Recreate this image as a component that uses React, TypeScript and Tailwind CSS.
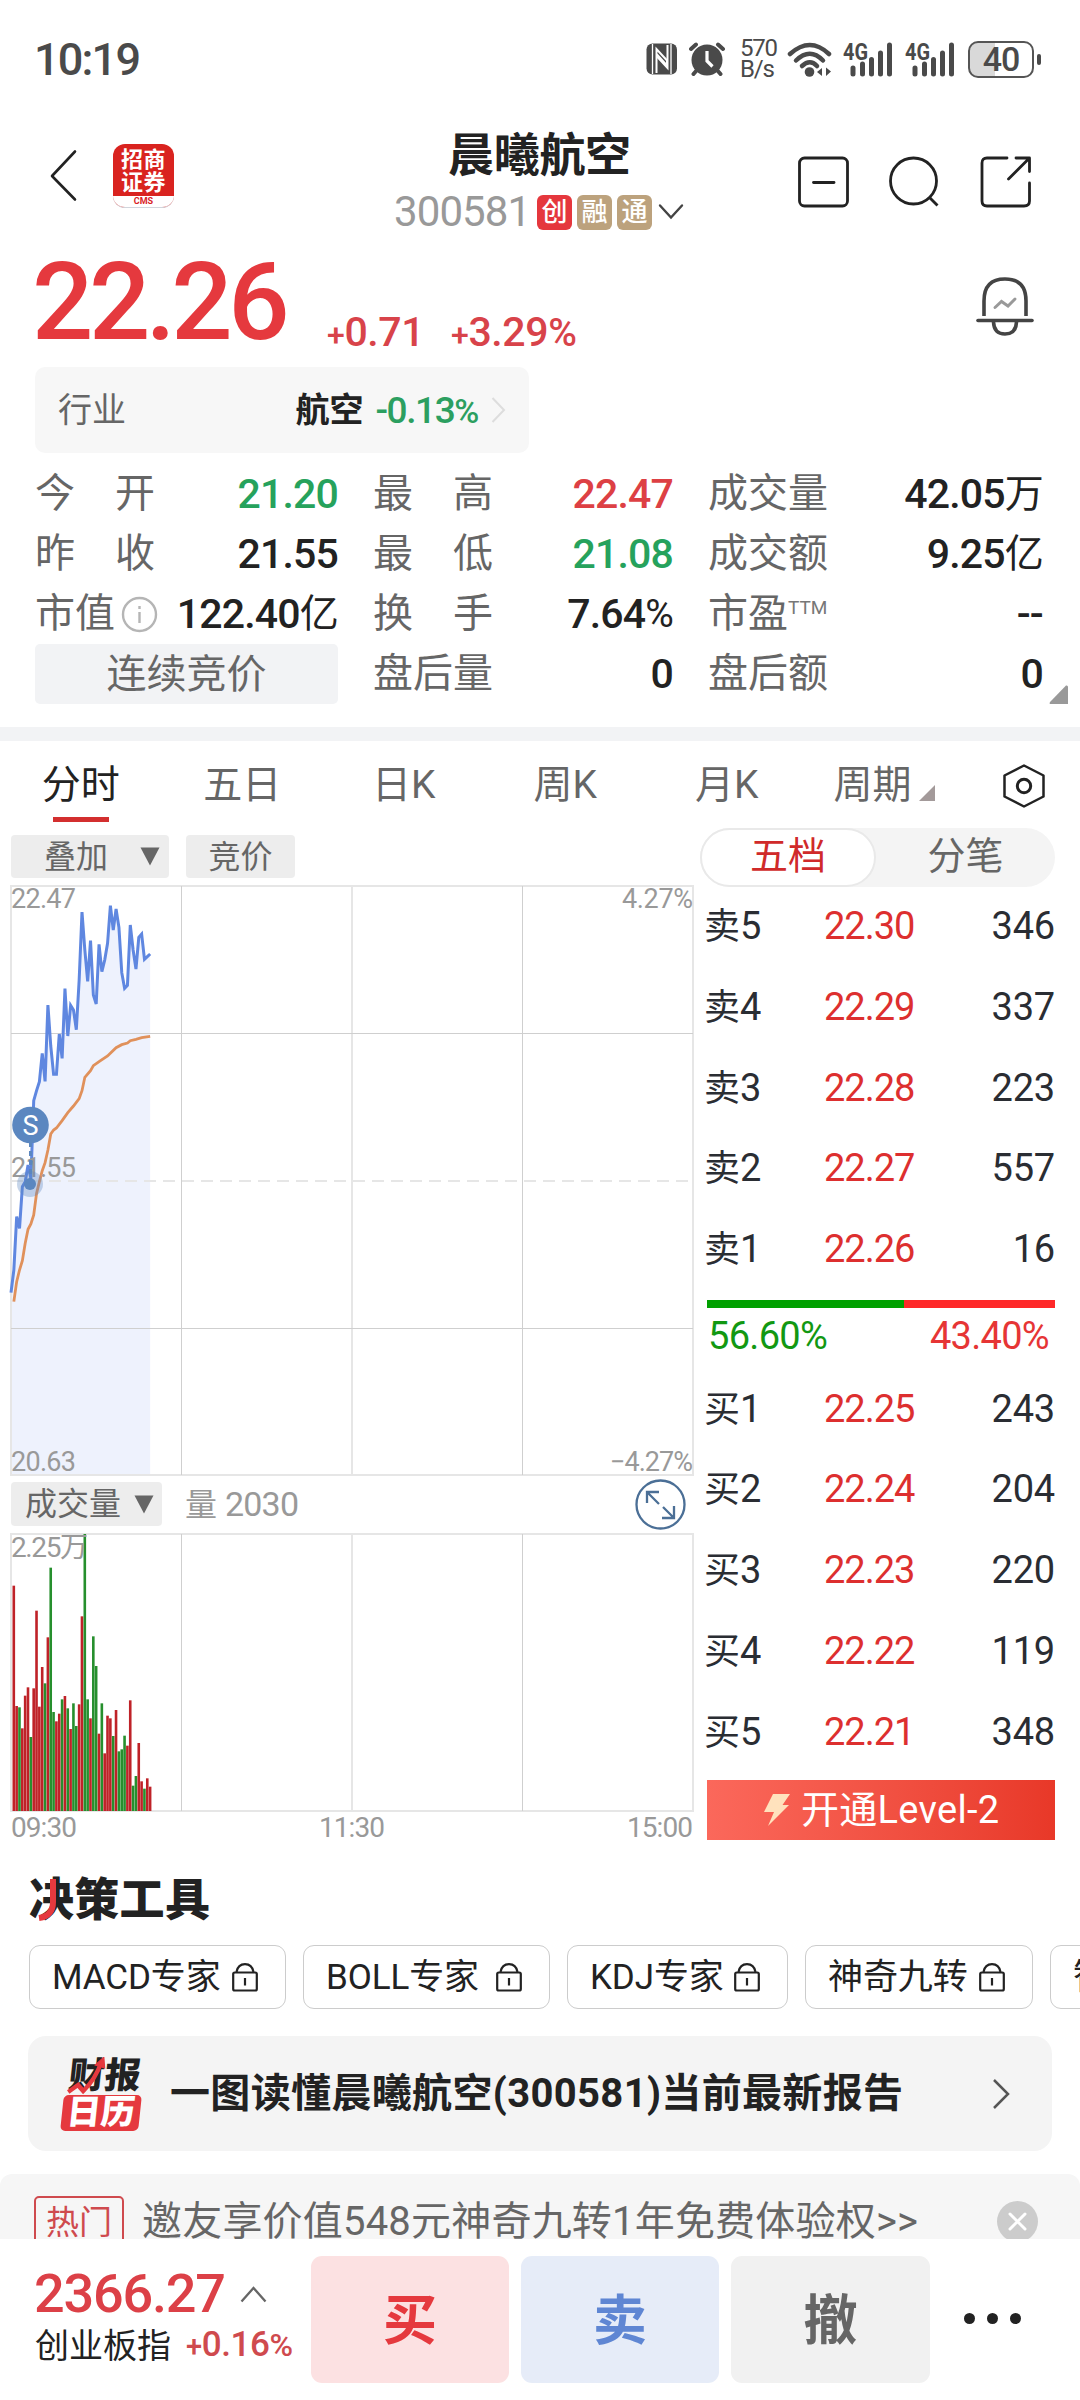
import React from 'react';

const stats = [
  [
    { label: '今开', value: '21.20', color: 'text-[#26a25c]' },
    { label: '最高', value: '22.47', color: 'text-[#dd4044]' },
    { label: '成交量', value: '42.05', unit: '万', color: 'text-[#222]' }
  ],
  [
    { label: '昨收', value: '21.55', color: 'text-[#222]' },
    { label: '最低', value: '21.08', color: 'text-[#26a25c]' },
    { label: '成交额', value: '9.25', unit: '亿', color: 'text-[#222]' }
  ],
  [
    { label: '市值', value: '122.40', unit: '亿', color: 'text-[#222]', info: true },
    { label: '换手', value: '7.64%', color: 'text-[#222]' },
    { label: '市盈', value: '--', color: 'text-[#222]', ttm: true }
  ],
  [
    { label: '', value: '', color: '', phase: '连续竞价' },
    { label: '盘后量', value: '0', color: 'text-[#222]' },
    { label: '盘后额', value: '0', color: 'text-[#222]' }
  ]
];

const asks = [
  ['卖5', '22.30', '346'],
  ['卖4', '22.29', '337'],
  ['卖3', '22.28', '223'],
  ['卖2', '22.27', '557'],
  ['卖1', '22.26', '16']
];

const bids = [
  ['买1', '22.25', '243'],
  ['买2', '22.24', '204'],
  ['买3', '22.23', '220'],
  ['买4', '22.22', '119'],
  ['买5', '22.21', '348']
];

const tools = [
  { name: 'MACD专家', width: 'w-[257px]' },
  { name: 'BOLL专家', width: 'w-[247px]' },
  { name: 'KDJ专家', width: 'w-[221px]' },
  { name: '神奇九转', width: 'w-[228px]' },
  { name: '智能选股', width: 'w-[228px]' }
];

// one value per minute, in thirds of a pixel below the top of the price chart
const STEP = 2.84;
const price = [
  1220, 1152, 992, 1027, 902, 887, 837, 877, 644, 614, 587, 502, 586, 357, 480, 565, 565, 444, 517, 308, 450, 358, 372,
  431, 282, 78, 192, 286, 164, 327, 354, 175, 257, 222, 172, 59, 132, 69, 124, 260, 307, 298, 117, 192, 249, 154, 144,
  220, 212, 204
];
const average = [
  [1, 1247], [2, 1187], [3, 1152], [4, 1124], [5, 1072], [6, 1030], [7, 1014], [8, 987], [9, 922], [10, 887],
  [11, 854], [12, 830], [13, 792], [14, 744], [15, 732], [16, 726], [18, 704], [20, 680], [22, 660], [24, 638],
  [25, 614], [26, 574], [28, 554], [29, 539], [31, 527], [34, 510], [37, 485], [39, 476], [41, 471], [42, 464],
  [44, 460], [46, 455], [49, 451]
];

const volume: [number, string][] = [
  [155, 'r'], [516, 'r'], [520, 'g'], [583, 'r'], [485, 'r'], [460, 'r'], [609, 'g'], [463, 'r'], [230, 'r'],
  [518, 'r'], [399, 'r'], [448, 'g'], [310, 'r'], [101, 'g'], [534, 'g'], [562, 'r'], [539, 'r'], [496, 'g'],
  [486, 'r'], [523, 'g'], [585, 'r'], [508, 'g'], [576, 'g'], [511, 'r'], [247, 'r'], [0, 'g'], [496, 'g'],
  [553, 'r'], [307, 'g'], [396, 'g'], [599, 'r'], [508, 'g'], [658, 'r'], [545, 'r'], [553, 'r'], [606, 'g'],
  [528, 'r'], [652, 'g'], [646, 'g'], [605, 'g'], [635, 'r'], [499, 'r'], [755, 'g'], [726, 'g'], [627, 'r'],
  [742, 'r'], [764, 'g'], [733, 'r'], [758, 'r']
];

function StatusBar() {
  return (
    <div className="flex h-[118px] items-center pl-[34px] text-[#4a4a4a]">
      <span className="w-[612px] text-[45px] font-medium leading-none tracking-[-1.8px]">10:19</span>
      <svg className="h-8 w-8" viewBox="0 0 32 32">
        <rect x="0.5" y="0.5" width="30.5" height="31" rx="6" fill="#4a4a4a" />
        <path d="M6.500 1V31M25 1V31" stroke="#fff" strokeWidth="1.300" />
        <path d="M10.500 30V6L21 17.500V22.500L10.500 11" fill="none" stroke="#fff" strokeWidth="2" />
        <path d="M21.500 2V25L11 13.500" fill="none" stroke="#fff" strokeWidth="2" />
      </svg>
      <svg className="ml-[11px] h-[34px] w-[36px]" viewBox="0 0 36 34">
        <circle cx="18" cy="18" r="15.500" fill="#4a4a4a" />
        <path d="M2 7L7 2.500M34 7L29 2.500" stroke="#4a4a4a" strokeWidth="4" strokeLinecap="round" />
        <path d="M8 28L4.500 32M28 28L31.500 32" stroke="#4a4a4a" strokeWidth="4" strokeLinecap="round" />
        <path d="M18 9V19L23.500 24.500" fill="none" stroke="#fff" strokeWidth="3.200" />
      </svg>
      <div className="ml-[15px] w-[38px] text-[24px] leading-[21px] tracking-[-1.2px]">
        <div>570</div>
        <div>B/s</div>
      </div>
      <svg className="ml-[9px] h-[35px] w-[46px]" viewBox="0 0 46 35">
        <g fill="none" stroke="#4a4a4a" strokeWidth="4.500" strokeLinecap="round">
          <path d="M3 12Q23 -6 42 12" />
          <path d="M9 18.500Q23 5 36 18.500" />
          <path d="M15 24Q23 16.500 30 24" />
        </g>
        <circle cx="22.500" cy="30" r="4.800" fill="#4a4a4a" />
        <path d="M30 30L35 26V34ZM37 26V34L37 30ZM39 25.500L44 29.500L39 34Z" fill="#4a4a4a" />
      </svg>
      {[0, 1].map((i) => (
        <svg key={i} className="ml-2.5 h-[36px] w-[52px] overflow-visible" viewBox="0 0 52 36">
          <text x="0" y="19" fontSize="23" fontWeight="700" textLength="25" lengthAdjust="spacingAndGlyphs" fill="#4a4a4a">
            4G
          </text>
          <path d="M10 27V33M19.500 23V33M28.500 18.500V33M37.500 12V33M46.500 4V33" stroke="#4a4a4a" strokeWidth="5" strokeLinecap="round" />
        </svg>
      ))}
      <div className="ml-[11px] flex h-[37px] w-[66px] shrink-0 items-center justify-center rounded-[10px] border-2 border-[#555] bg-[linear-gradient(90deg,#d9d9d9_40%,#fff_40%)]">
        <span className="text-[34px] font-medium leading-none tracking-[-1px]">40</span>
      </div>
      <div className="ml-[3px] h-[11px] w-1 rounded-sm bg-[#4a4a4a]" />
    </div>
  );
}

function Header() {
  return (
    <div className="flex h-[130px] items-start pl-[49px]">
      <svg className="mt-[31px] h-[54px] w-[29px]" viewBox="0 0 29 54" fill="none" stroke="#222" strokeWidth="2.600" strokeLinecap="round" strokeLinejoin="round">
        <path d="M26 2.500L3 27L26 50.500" />
      </svg>
      <div className="ml-[35px] mt-[26px] flex h-[64px] w-[61px] flex-col overflow-hidden rounded-[12px] border-b border-gray-300 bg-[#d9231f] text-white">
        <div className="h-[53px] pt-[4px] text-center text-[22px] font-bold leading-[23px] tracking-[0.5px]">
          <div>招商</div>
          <div>证券</div>
        </div>
        <div className="h-[11px] bg-white text-center text-[9px] font-bold leading-[10px] text-[#d9231f]">CMS</div>
      </div>
      <div className="ml-[220px] w-[341px] pt-[13px]">
        <h1 className="pl-[54px] text-[46px] font-bold leading-[48px] tracking-[-0.3px] text-[#222]">晨曦航空</h1>
        <div className="mt-[11px] flex items-center leading-[44px]">
          <span className="w-[143px] text-[42px] tracking-[-0.9px] text-[#999]">300581</span>
          <span className="flex h-[35px] w-[35px] items-center justify-center rounded-[6px] bg-[#e5373d] text-[26px] font-medium text-white">创</span>
          <span className="ml-[5px] flex h-[35px] w-[35px] items-center justify-center rounded-[6px] bg-[#bca27d] text-[26px] font-medium text-white">融</span>
          <span className="ml-[5px] flex h-[35px] w-[35px] items-center justify-center rounded-[6px] bg-[#bca27d] text-[26px] font-medium text-white">通</span>
          <svg className="ml-[6px] h-[18px] w-[26px]" viewBox="0 0 26 18" fill="none" stroke="#444" strokeWidth="2.400" strokeLinecap="round">
            <path d="M2 2.500L13 14.500L24 2.500" />
          </svg>
        </div>
      </div>
      <div className="ml-[63px] flex gap-[39px] pt-[38px]">
        <svg className="h-[52px] w-[52px]" viewBox="0 0 52 52" fill="none" stroke="#222" strokeWidth="2.800" strokeLinecap="round">
          <rect x="1.500" y="2" width="48" height="48" rx="5" />
          <path d="M15.500 26.500H36" />
        </svg>
        <svg className="h-[52px] w-[52px]" viewBox="0 0 52 52" fill="none" stroke="#222" strokeWidth="2.800">
          <circle cx="24.500" cy="25" r="23" />
          <path d="M40 41L48.500 49.500" />
        </svg>
        <svg className="h-[52px] w-[52px]" viewBox="0 0 52 52" fill="none" stroke="#222" strokeWidth="2.800" strokeLinecap="round" strokeLinejoin="round">
          <path d="M27 2H7Q2 2 2 7V45Q2 50 7 50H44Q49.500 50 49.500 45V27" />
          <path d="M36 2H49.500V15.500M48 3.500L28.500 23" />
        </svg>
      </div>
    </div>
  );
}

function Quote() {
  return (
    <div className="px-[35px]">
      <div className="flex h-[119px] items-start leading-none text-[#e5393e]">
        <span className="-ml-[3px] w-[295px] text-[108px] font-medium leading-[109px] tracking-[-4.500px]">22.26</span>
        <div className="flex items-baseline gap-[27px] pt-[61px] text-[41px] font-medium leading-[46px] tracking-[-0.400px] text-[#d8434a]">
          <span>
            <span className="text-[32px]">+</span>0.71
          </span>
          <span>
            <span className="text-[32px]">+</span>3.29<span className="text-[39px]">%</span>
          </span>
        </div>
        <svg className="ml-auto mr-[10px] mt-[29px] h-[60px] w-[60px]" viewBox="0 0 60 60" fill="none" stroke="#444" strokeWidth="3.600" strokeLinecap="round">
          <path d="M9 39V24Q9 2 30 2Q51 2 51 24V39" strokeLinecap="butt" />
          <path d="M3 43.500H57" />
          <path d="M18.500 45Q19 57 30 57Q41 57 41.500 45" />
          <path d="M20 30.500L26.500 24.500L33 29L40 22" stroke="#999" strokeWidth="3" />
        </svg>
      </div>
      <div className="flex h-[86px] w-[494px] items-center rounded-[10px] bg-[#f7f7f7] pl-[23px] pr-[23px] text-[34px] leading-none">
        <span className="text-[#666]">行业</span>
        <span className="ml-auto font-bold text-[#222]">航空</span>
        <span className="ml-[12px] text-[37px] font-medium tracking-[-1.400px] text-[#2c9f60]">
          -0.13<span className="text-[34px]">%</span>
        </span>
        <svg className="ml-[13px] h-[26px] w-[15px]" viewBox="0 0 15 26" fill="none" stroke="#ddd" strokeWidth="2">
          <path d="M1.500 1L13 13L1.500 25" />
        </svg>
      </div>
    </div>
  );
}

function Stats() {
  return (
    <div className="relative mt-[11px] px-[35px] pb-[23px]">
      {stats.map((row, i) => (
        <div key={i} className="grid h-[60px] grid-cols-[303px_300px_335px] gap-x-[35px] text-[40px] leading-none">
          {row.map((cell, j) =>
            cell.phase ? (
              <div key={j} className="flex items-center justify-center rounded-[5px] bg-[#f2f3f5] pt-[2px] text-[#666]">
                {cell.phase}
              </div>
            ) : (
              <div key={j} className="flex items-center">
                {cell.label.length === 2 && !cell.info && !cell.ttm ? (
                  <span className="flex w-[120px] justify-between text-[#666]">
                    <span>{cell.label[0]}</span>
                    <span>{cell.label[1]}</span>
                  </span>
                ) : (
                  <span className="text-[#666]">{cell.label}</span>
                )}
                {cell.ttm && <span className="mb-[14px] text-[19px] text-[#777]">TTM</span>}
                {cell.info && (
                  <svg className="ml-[6px] h-[37px] w-[37px]" viewBox="0 0 37 37" fill="none" stroke="#b5b5b5" strokeWidth="2.400">
                    <circle cx="18.500" cy="18.500" r="16.500" />
                    <path d="M18.500 16V27M18.500 10V13" />
                  </svg>
                )}
                <span className={`ml-auto flex items-center text-[41px] font-medium tracking-[-0.8px] ${cell.color}`}>
                  {cell.value.replace('%', '')}
                  {cell.value.endsWith('%') && <span className="text-[39px] font-normal">%</span>}
                  {cell.unit && <span className="text-[39px] font-normal">{cell.unit}</span>}
                </span>
              </div>
            )
          )}
        </div>
      ))}
      <svg className="absolute bottom-[23px] right-[12px] h-[19px] w-[19px]" viewBox="0 0 19 19">
        <path d="M17 0.500Q19 0 19 2V19H1Q0 18.500 1 17Z" fill="#999" />
      </svg>
    </div>
  );
}

function Tabs() {
  const tabs = ['分时', '五日', '日K', '周K', '月K'];
  return (
    <div className="flex h-[87px] items-center pt-[2px] text-[39px] leading-none text-[#666]">
      {tabs.map((tab, i) => (
        <div key={tab} className={`relative w-[161.500px] text-center ${i === 0 ? 'text-[#222]' : ''}`}>
          {tab}
          {i === 0 && <span className="absolute left-[53px] top-[51px] h-[5px] w-[56px] bg-[#d32f2f]" />}
        </div>
      ))}
      <div className="ml-[26px] flex items-end">
        周期
        <svg className="mb-[4px] ml-[7px] h-4 w-4" viewBox="0 0 16 16">
          <path d="M16 0V16H0Z" fill="#a39a9a" />
        </svg>
      </div>
      <svg className="ml-[68px] h-[44px] w-[42px]" viewBox="0 0 42 44" fill="none" stroke="#222" strokeWidth="2.500" strokeLinejoin="round">
        <path d="M21 1.500L40.500 11.500V32.500L21 42.500L1.500 32.500V11.500Z" />
        <circle cx="21" cy="22" r="6.700" strokeWidth="3" />
      </svg>
    </div>
  );
}

function DownTriangle() {
  return (
    <svg className="h-[19px] w-[20px]" viewBox="0 0 20 19">
      <path d="M0.500 0.500H19.500L10 18.500Z" fill="#666" />
    </svg>
  );
}

function PriceChart() {
  const line = price.map((y, i) => `${11 + i * STEP},${y / 3 + 2}`).join(' ');
  const avg = average.map(([i, y]) => `${11 + i * STEP},${y / 3 + 2}`).join(' ');
  const lastX = 11 + (price.length - 1) * STEP;
  return (
    <svg className="block h-[592px] w-[700px] overflow-visible" viewBox="0 0 700 592">
      <polygon points={`11,590 ${line} ${lastX},590`} fill="#eef2fd" />
      <g stroke="#e6e6e6" strokeWidth="2" fill="none">
        <rect x="11" y="2" width="682" height="589" />
        <path d="M352 2V591" />
        <path d="M11 297H693" strokeDasharray="12 7" />
      </g>
      <path d="M11 149.500H693M11 444.500H693M181.500 2V591M522.500 2V591" stroke="#cfcfcf" strokeWidth="1" />
      <polyline points={line} fill="none" stroke="#5f87e0" strokeWidth="3" />
      <polyline points={avg} fill="none" stroke="#e0915b" strokeWidth="2.800" />
      <g fontSize="27" fill="#999">
        <text x="11" y="24" textLength="65">22.47</text>
        <text x="11" y="293" textLength="65">21.55</text>
        <text x="11" y="587" textLength="65">20.63</text>
        <text x="622" y="24" textLength="71">4.27%</text>
        <text x="610" y="587" textLength="83">−4.27%</text>
      </g>
      <path d="M30.500 258V296" stroke="#5b87c0" strokeWidth="3" strokeDasharray="5 4" />
      <circle cx="30" cy="300" r="13" fill="#5b87c0" fillOpacity="0.35" />
      <circle cx="30" cy="300" r="6" fill="#5b87c0" />
      <circle cx="30.500" cy="241" r="18.300" fill="#5b87c0" />
      <text x="30.500" y="250.500" fontSize="27" textAnchor="middle" fill="#fff">S</text>
    </svg>
  );
}

function VolumeChart() {
  return (
    <svg className="block h-[312px] w-[700px]" viewBox="0 0 700 312">
      <g stroke="#e6e6e6" strokeWidth="2" fill="none">
        <rect x="11" y="2" width="682" height="277" />
        <path d="M352 2V279" />
      </g>
      <path d="M181.500 2V279M522.500 2V279" stroke="#cfcfcf" strokeWidth="1" />
      {volume.map(([y, c], i) => (
        <rect key={i} x={12.5 + i * STEP} y={y / 3 + 2} width="2.6" height={277 - y / 3} fill={c === 'r' ? '#bf2228' : '#268f2d'} />
      ))}
      <g fontSize="28" fill="#999">
        <text x="11" y="25" textLength="77">2.25万</text>
        <text x="11" y="305" textLength="66">09:30</text>
        <text x="319" y="305" textLength="66">11:30</text>
        <text x="627" y="305" textLength="66">15:00</text>
      </g>
    </svg>
  );
}

function BookRows({ rows }: { rows: string[][] }) {
  return (
    <>
      {rows.map(([side, p, qty]) => (
        <div key={side} className="flex h-[80.700px] items-center text-[38px] leading-none tracking-[-1px] text-[#2a2d33]">
          <span className="w-[120px]">
            <span className="text-[36px] tracking-normal">{side[0]}</span>
            {side[1]}
          </span>
          <span className="text-[#dd2f2f]">{p}</span>
          <span className="ml-auto tracking-[-0.200px]">{qty}</span>
        </div>
      ))}
    </>
  );
}

function OrderBook() {
  return (
    <div className="w-[380px] pr-[25px]">
      <div className="flex h-[59px] rounded-full bg-[#f4f4f4] text-[38px] leading-none">
        <div className="flex w-[176px] items-center justify-center rounded-full border-2 border-[#e9e9e9] bg-white pb-[3px] text-[#d02a2a]">五档</div>
        <div className="flex flex-1 items-center justify-center pb-[3px] text-[#666]">分笔</div>
      </div>
      <div className="-mt-px pl-[4px]">
        <BookRows rows={asks} />
      </div>
      <div className="pl-[7px]">
        <div className="mt-[11px] flex h-2">
          <div className="h-full w-[56.600%] bg-[#00a000]" />
          <div className="h-full flex-1 bg-[#ff2828]" />
        </div>
        <div className="flex h-[60px] items-center justify-between pl-[1px] pr-[6px] pb-[4px] text-[38px] leading-none tracking-[-0.700px]">
          <span className="text-[#129812]">56.60%</span>
          <span className="text-[#e63535]">43.40%</span>
        </div>
      </div>
      <div className="pl-[4px]">
        <BookRows rows={bids} />
      </div>
      <div className="ml-[7px] mt-[8px] flex h-[60px] items-center bg-gradient-to-r from-[#fb685b] to-[#e83828] pl-[56px] text-[38px] leading-none tracking-[0.300px] text-white">
        <svg className="mr-[10px] h-[34px] w-[28px]" viewBox="0 0 28 34">
          <path d="M10 1H27L19.500 12H26L5 33L11 19H1Z" fill="#ffe2bd" />
        </svg>
        开通Level-2
      </div>
    </div>
  );
}

function Market() {
  return (
    <div className="flex">
      <div className="w-[700px]">
        <div className="flex h-[56px] items-start pl-[11px] pt-[7px] text-[32px] leading-none text-[#666]">
          <div className="flex h-[43px] w-[158px] items-center justify-between rounded bg-[#ededed] pl-[33px] pr-[9px]">
            叠加
            <DownTriangle />
          </div>
          <div className="ml-[17px] flex h-[43px] w-[109px] items-center justify-center rounded bg-[#ededed]">竞价</div>
        </div>
        <PriceChart />
        <div className="flex h-[56px] items-center pl-[11px] text-[32px] leading-none">
          <div className="flex h-[44px] w-[151px] items-center justify-between rounded bg-[#ededed] pl-[14px] pr-[8px] text-[#666]">
            成交量
            <DownTriangle />
          </div>
          <span className="ml-[23px] text-[#999]">
            量 <span className="text-[34px] tracking-[-0.8px]">2030</span>
          </span>
          <svg className="ml-auto mr-[14px] h-[51px] w-[51px]" viewBox="0 0 51 51" fill="none" stroke="#4b6f96" strokeWidth="2.300">
            <circle cx="25.500" cy="25.500" r="24" />
            <path d="M12 24V13H24M12.500 13.500L24 25" />
            <path d="M39 27V39H27M38.500 38.500L28 28" />
          </svg>
        </div>
        <VolumeChart />
      </div>
      <OrderBook />
    </div>
  );
}

function Tools() {
  return (
    <div className="h-[192px] pl-[29px] pt-[32px]">
      <div className="relative h-[50px] text-[45px] font-black leading-[50px] tracking-[0.300px] text-[#222]">
        决策工具
        <svg className="absolute left-0 top-0 h-[50px] w-[50px]" viewBox="0 0 50 50" fill="none" stroke="#e5393e" strokeWidth="6">
          <path d="M24 3V26Q24 40 10 42" />
        </svg>
      </div>
      <div className="mt-[19px] flex gap-[17px]">
        {tools.map((tool) => (
          <div key={tool.name} className={`flex h-[64px] shrink-0 items-center justify-between rounded-[11px] border border-[#ccc] pl-[22px] pr-[27px] text-[35px] leading-none tracking-[-0.100px] text-[#222] ${tool.width}`}>
            <span className="whitespace-nowrap">{tool.name}</span>
            <svg className="h-[29px] w-[26px]" viewBox="0 0 26 29" fill="none" stroke="#222" strokeWidth="2.200">
              <rect x="1.200" y="9.500" width="23.600" height="18" rx="1.500" />
              <path d="M4.500 9Q6 1.200 13 1.200Q20 1.200 21.500 9M13 15V22.500" />
            </svg>
          </div>
        ))}
      </div>
    </div>
  );
}

function Report() {
  return (
    <div className="mx-[28px] flex h-[115px] items-center rounded-[18px] bg-[#f4f4f4] pl-[36px]">
      <div className="relative w-[78px] -skew-x-6 text-center font-black">
        <div className="text-[36px] leading-[38px] text-[#222]">财报</div>
        <div className="h-[36px] rounded-[5px] bg-[#e5393e] text-[34px] leading-[34px] text-white">日历</div>
        <svg className="absolute left-0 top-0 h-[38px] w-[50px]" viewBox="0 0 50 38" fill="none" stroke="#e5393e" strokeWidth="4.500">
          <path d="M4 35L13 28L19 34Q30 22 34 5" />
          <path d="M28 8L36 0L38 11Z" fill="#e5393e" strokeWidth="1" />
        </svg>
      </div>
      <span className="ml-[28px] whitespace-nowrap pt-[1px] text-[40px] font-bold leading-none tracking-[0.350px] text-[#222]">
        一图读懂晨曦航空(300581)当前最新报告
      </span>
      <svg className="ml-auto mr-[42px] h-[32px] w-[18px]" viewBox="0 0 18 32" fill="none" stroke="#555" strokeWidth="2.500">
        <path d="M2 2L16 16L2 30" />
      </svg>
    </div>
  );
}

function Promo() {
  return (
    <div className="mt-[23px] h-[65px] overflow-hidden rounded-t-[12px] bg-[#f6f6f6]">
      <div className="flex pl-[34px] pt-[22px]">
        <span className="flex h-[52px] w-[90px] items-center justify-center rounded-[5px] border-2 border-[#cf4a4e] text-[33px] leading-none text-[#cf4a4e]">热门</span>
        <span className="ml-[18px] whitespace-nowrap text-[40px] leading-[52px] tracking-[0.200px] text-[#666]">邀友享价值548元神奇九转1年免费体验权&gt;&gt;</span>
        <svg className="ml-auto mr-[42px] mt-[5px] h-[41px] w-[41px]" viewBox="0 0 41 41">
          <circle cx="20.500" cy="20.500" r="20.500" fill="#ccc" />
          <path d="M13 13L28 28M28 13L13 28" stroke="#fff" strokeWidth="3" strokeLinecap="round" />
        </svg>
      </div>
    </div>
  );
}

function TradeBar() {
  return (
    <div className="flex h-[161px] bg-white pl-[35px] pt-[17px]">
      <div className="w-[276px] pt-[12px]">
        <div className="-ml-px flex items-center text-[54px] font-medium leading-[52px] tracking-[-1.200px] text-[#dc4047]">
          2366.27
          <svg className="ml-[15px] h-[17px] w-[27px]" viewBox="0 0 27 17" fill="none" stroke="#666" strokeWidth="2.300">
            <path d="M1.500 15.500L13.500 2L25.500 15.500" />
          </svg>
        </div>
        <div className="flex items-center text-[34px] leading-[50px] text-[#222]">
          创业板指
          <span className="ml-[15px] text-[35px] font-medium tracking-[-0.400px] text-[#cf4a4e]">
            <span className="text-[29px]">+</span>0.16<span className="text-[32px]">%</span>
          </span>
        </div>
      </div>
      <div className="flex gap-[12px] text-[54px] font-bold leading-none">
        <button className="h-[127px] w-[198px] rounded-[11px] bg-[#fce1e2] pt-[4px] text-[#e5393e]">买</button>
        <button className="h-[127px] w-[198px] rounded-[11px] bg-[#e6ecf8] pt-[4px] text-[#5f86d3]">卖</button>
        <button className="h-[127px] w-[199px] rounded-[11px] bg-[#f1f1f1] pt-[4px] text-[#666]">撤</button>
      </div>
      <div className="ml-[34px] flex h-[125px] items-center gap-[12px]">
        <span className="h-[11px] w-[11px] rounded-full bg-[#222]" />
        <span className="h-[11px] w-[11px] rounded-full bg-[#222]" />
        <span className="h-[11px] w-[11px] rounded-full bg-[#222]" />
      </div>
    </div>
  );
}

export default function App() {
  return (
    <div className="h-[2400px] w-[1080px] overflow-hidden bg-white font-['Roboto','Noto_Sans_CJK_SC',sans-serif]">
      <StatusBar />
      <Header />
      <Quote />
      <Stats />
      <div className="h-[14px] bg-[#f2f3f5]" />
      <Tabs />
      <Market />
      <Tools />
      <Report />
      <Promo />
      <TradeBar />
    </div>
  );
}
